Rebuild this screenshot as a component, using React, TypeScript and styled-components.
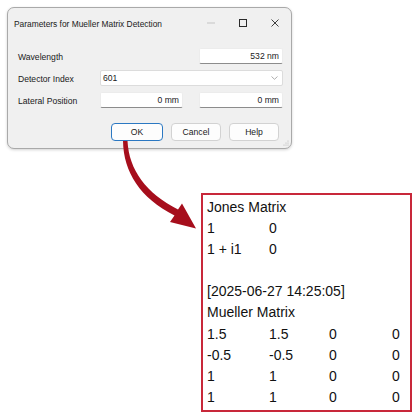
import React from "react";
import styled, { createGlobalStyle } from "styled-components";

const Global = createGlobalStyle`
  html, body { margin: 0; padding: 0; background: #ffffff; }
  body { font-family: "Liberation Sans", Arial, sans-serif; }
`;

const Page = styled.div`
  position: relative;
  width: 418px;
  height: 420px;
  box-sizing: border-box;
  padding: 7px 0 0 7px;
  overflow: hidden;
`;

const Dialog = styled.div`
  position: relative;
  width: 285px;
  height: 142px;
  box-sizing: border-box;
  background: #f0f0f0;
  border: 1px solid #a9a9a9;
  border-radius: 7px;
  box-shadow: 0 1px 3px rgba(0, 0, 0, 0.18);
  display: flex;
  flex-direction: column;
  font-family: "Liberation Sans", Arial, sans-serif;
  color: #1a1a1a;
`;

const TitleBar = styled.div`
  height: 30px;
  display: flex;
  align-items: center;
  padding-left: 6px;
  font-size: 8.4px;
`;

const Title = styled.div`
  flex: 1;
  padding-top: 1px;
`;

const Controls = styled.div`
  display: flex;
  align-items: center;
  height: 100%;
`;

const CtrlBtn = styled.div`
  width: 32px;
  height: 100%;
  display: flex;
  align-items: center;
  justify-content: center;
`;

const Body = styled.div`
  flex: 1;
  padding: 10px 7px 0 10px;
  display: flex;
  flex-direction: column;
`;

const Form = styled.div`
  display: grid;
  grid-template-columns: 66px 83px 84px;
  column-gap: 16px;
  row-gap: 6px;
  grid-auto-rows: 16px;
  font-size: 8.6px;
`;

const Label = styled.div`
  grid-column: 1;
  display: flex;
  align-items: center;
  padding-top: 1px;
  white-space: nowrap;
`;

const Field = styled.div<{ $from: number; $span?: number }>`
  grid-column: ${(p) => p.$from} / span ${(p) => p.$span ?? 1};
  box-sizing: border-box;
  background: #ffffff;
  border: 1px solid #ececec;
  border-bottom: 1px solid #8c8c8c;
  border-radius: 2px;
  display: flex;
  align-items: center;
  justify-content: flex-end;
  padding: 0 3px 0 6px;
`;

const Select = styled.div`
  grid-column: 2 / span 2;
  box-sizing: border-box;
  background: #ffffff;
  border: 1px solid #dcdcdc;
  border-radius: 2px;
  display: flex;
  align-items: center;
  justify-content: space-between;
  padding: 0 4px 0 2px;
`;

const Buttons = styled.div`
  display: flex;
  gap: 8px;
  justify-content: flex-end;
  margin-top: 15px;
  padding-right: 5px;
`;

const Button = styled.div<{ $primary?: boolean }>`
  width: ${(p) => (p.$primary ? 52 : 50)}px;
  height: 18px;
  box-sizing: border-box;
  background: #fdfdfd;
  border: 1px solid ${(p) => (p.$primary ? "#2b78c2" : "#d2d2d2")};
  border-radius: 4px;
  display: flex;
  align-items: center;
  justify-content: center;
  font-size: 8.6px;
  color: #1a1a1a;
`;

const Grip = styled.svg`
  position: absolute;
  right: 2px;
  bottom: 2px;
`;

const ArrowLayer = styled.svg`
  position: absolute;
  left: 0;
  top: 0;
  pointer-events: none;
`;

const Output = styled.div`
  margin: 44px 0 0 194px;
  width: 211px;
  height: 219px;
  box-sizing: border-box;
  border: 2px solid #c8283a;
  padding: 1.5px 0 0 4px;
  font-family: "Liberation Sans", Arial, sans-serif;
  font-size: 14px;
  color: #111;
  line-height: 21.2px;
`;

const Line = styled.div`
  height: 21.2px;
  white-space: nowrap;
`;

const Row = styled.div`
  display: grid;
  grid-template-columns: 62px 60px 63px auto;
  height: 21.2px;
`;

const jones = [
  ["1", "0"],
  ["1 + i1", "0"],
];

const mueller = [
  ["1.5", "1.5", "0", "0"],
  ["-0.5", "-0.5", "0", "0"],
  ["1", "1", "0", "0"],
  ["1", "1", "0", "0"],
];

export default function App() {
  return (
    <Page>
      <Global />
      <Dialog>
        <TitleBar>
          <Title>Parameters for Mueller Matrix Detection</Title>
          <Controls>
            <CtrlBtn>
              <svg width="8" height="2" viewBox="0 0 8 2">
                <line x1="0" y1="1" x2="8" y2="1" stroke="#c4c4c4" strokeWidth="1" />
              </svg>
            </CtrlBtn>
            <CtrlBtn>
              <svg width="8" height="8" viewBox="0 0 8 8">
                <rect x="0.5" y="0.5" width="7" height="7" fill="none" stroke="#2a2a2a" strokeWidth="1" />
              </svg>
            </CtrlBtn>
            <CtrlBtn>
              <svg width="8" height="8" viewBox="0 0 8 8">
                <path d="M0.5 0.5 L7.5 7.5 M7.5 0.5 L0.5 7.5" stroke="#2a2a2a" strokeWidth="0.9" />
              </svg>
            </CtrlBtn>
          </Controls>
        </TitleBar>
        <Body>
          <Form>
            <Label>Wavelength</Label>
            <Field $from={3}>532 nm</Field>
            <Label>Detector Index</Label>
            <Select>
              <span>601</span>
              <svg width="7" height="4" viewBox="0 0 7 4">
                <path d="M0.5 0.5 L3.5 3.3 L6.5 0.5" fill="none" stroke="#9a9a9a" strokeWidth="0.8" />
              </svg>
            </Select>
            <Label>Lateral Position</Label>
            <Field $from={2}>0 mm</Field>
            <Field $from={3}>0 mm</Field>
          </Form>
          <Buttons>
            <Button $primary>OK</Button>
            <Button>Cancel</Button>
            <Button>Help</Button>
          </Buttons>
        </Body>
        <Grip width="6" height="6" viewBox="0 0 6 6">
          <circle cx="5" cy="1" r="0.6" fill="#b5b5b5" />
          <circle cx="3" cy="3" r="0.6" fill="#b5b5b5" />
          <circle cx="5" cy="3" r="0.6" fill="#b5b5b5" />
          <circle cx="1" cy="5" r="0.6" fill="#b5b5b5" />
          <circle cx="3" cy="5" r="0.6" fill="#b5b5b5" />
          <circle cx="5" cy="5" r="0.6" fill="#b5b5b5" />
        </Grip>
      </Dialog>
      <ArrowLayer width="418" height="420" viewBox="0 0 418 420">
        <path
          d="M123 141 C123.5 172 140 198 174.5 215.5 L170 222 L196 228.5 L182 203.5 L178 209.5 C146 193 129 170 127.5 141 Z"
          fill="#a60e1c"
        />
      </ArrowLayer>
      <Output>
        <Line>Jones Matrix</Line>
        {jones.map((r, i) => (
          <Row key={"j" + i}>
            {r.map((c, k) => (
              <span key={k}>{c}</span>
            ))}
          </Row>
        ))}
        <Line />
        <Line>[2025-06-27 14:25:05]</Line>
        <Line>Mueller Matrix</Line>
        {mueller.map((r, i) => (
          <Row key={"m" + i}>
            {r.map((c, k) => (
              <span key={k}>{c}</span>
            ))}
          </Row>
        ))}
      </Output>
    </Page>
  );
}
